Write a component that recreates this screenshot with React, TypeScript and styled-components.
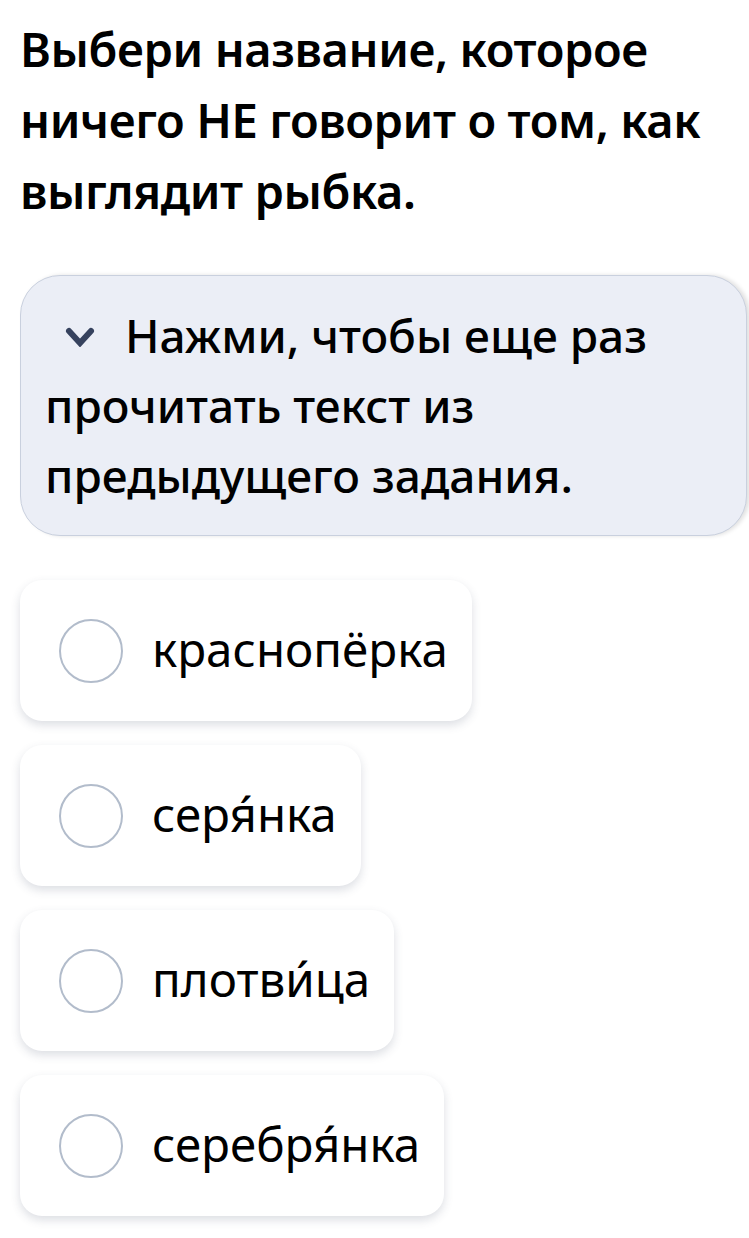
import React from "react";
import styled, { createGlobalStyle } from "styled-components";

const GlobalStyle = createGlobalStyle`
  html, body {
    margin: 0;
    padding: 0;
    background: #ffffff;
  }
  body {
    font-family: "Noto Sans", "Open Sans", sans-serif;
    color: #000000;
  }
`;

const Page = styled.div`
  width: 749px;
  box-sizing: border-box;
  padding: 14px 2px 20px 20px;
  display: flex;
  flex-direction: column;
`;

const Question = styled.h1`
  margin: 0;
  font-size: 47px;
  font-weight: 600;
  line-height: 71px;
  letter-spacing: -0.4px;
`;

const Hint = styled.div`
  margin-top: 48px;
  box-sizing: border-box;
  min-height: 261px;
  padding: 24px 30px 24px 24px;
  background: #ebeef6;
  border: 1.5px solid #c9d0de;
  border-radius: 40px;
  font-size: 46px;
  font-weight: 500;
  line-height: 70px;
  box-shadow: 3px 0 4px rgba(0, 0, 0, 0.12);
`;

const Chevron = styled.span`
  display: inline-flex;
  vertical-align: middle;
  margin: 0 30px 8px 20px;
`;

const Options = styled.div`
  margin-top: 44px;
  display: flex;
  flex-direction: column;
  align-items: flex-start;
  gap: 24px;
`;

const Card = styled.label`
  display: flex;
  align-items: center;
  gap: 29px;
  box-sizing: border-box;
  height: 141px;
  padding: 0 24px 0 39px;
  background: #ffffff;
  border-radius: 22px;
  box-shadow: 0 4px 10px rgba(60, 70, 100, 0.18);
`;

const Radio = styled.span`
  width: 64px;
  height: 64px;
  box-sizing: border-box;
  border-radius: 50%;
  border: 2px solid #b2bccb;
  flex: none;
`;

const OptionText = styled.span`
  font-size: 47.5px;
  line-height: 1;
  padding-bottom: 4px;
`;

const options = ["краснопёрка", "серя́нка", "плотви́ца", "серебря́нка"];

export default function App() {
  return (
    <>
      <GlobalStyle />
      <Page>
        <Question>Выбери название, которое ничего НЕ говорит о том, как выглядит рыбка.</Question>
        <Hint>
          <Chevron>
            <svg width="30" height="20" viewBox="0 0 30 20">
              <path d="M4 4 L15 16 L26 4" fill="none" stroke="#36425e" strokeWidth="6" strokeLinecap="round" strokeLinejoin="miter" />
            </svg>
          </Chevron>
          Нажми, чтобы еще раз прочитать текст из предыдущего задания.
        </Hint>
        <Options>
          {options.map((o) => (
            <Card key={o}>
              <Radio />
              <OptionText>{o}</OptionText>
            </Card>
          ))}
        </Options>
      </Page>
    </>
  );
}
